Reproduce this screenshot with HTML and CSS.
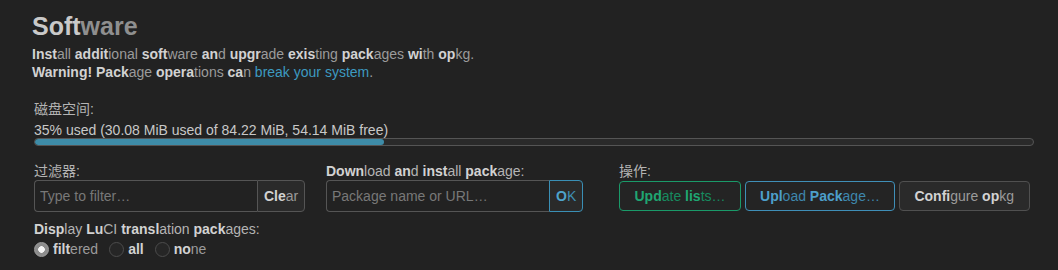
FILE: index.html
```html
<!DOCTYPE html>
<html lang="en">
<head>
<meta charset="utf-8">
<title>Software</title>
<link rel="stylesheet" href="styles.css">
</head>
<body>
<div class="page">
  <h2 class="title"><b>Soft</b><span>ware</span></h2>
  <p class="desc"><b>Inst</b>all <b>addit</b>ional <b>soft</b>ware <b>an</b>d <b>upgr</b>ade <b>exis</b>ting <b>pack</b>ages <b>wi</b>th <b>op</b>kg.</p>
  <p class="desc"><b>Warning! Pack</b>age <b>opera</b>tions <b>ca</b>n <a class="link" href="#">break your system</a>.</p>

  <div class="section">
    <div class="disk">
      <div class="lbl">磁盘空间:</div>
      <div class="used">35% used (30.08 MiB used of 84.22 MiB, 54.14 MiB free)</div>
      <div class="bar"><div class="fill" style="width:35%"></div></div>
    </div>

    <div class="controls">
      <div class="col">
        <div class="lbl">过滤器:</div>
        <div class="ctl">
          <input class="field" type="text" placeholder="Type to filter…">
          <button class="side"><b>Cle</b>ar</button>
        </div>
      </div>
      <div class="col">
        <div class="lbl"><b>Down</b>load <b>an</b>d <b>inst</b>all <b>pack</b>age:</div>
        <div class="ctl">
          <input class="field" type="text" placeholder="Package name or URL…">
          <button class="side ok"><b>O</b>K</button>
        </div>
      </div>
      <div class="col">
        <div class="lbl">操作:</div>
        <div class="actions">
          <button class="btn green"><b>Upd</b>ate <b>lis</b>ts…</button>
          <button class="btn blue"><b>Upl</b>oad <b>Pack</b>age…</button>
          <button class="btn plain"><b>Confi</b>gure <b>op</b>kg</button>
        </div>
      </div>
    </div>

    <div class="lang">
      <div class="lbl"><b>Disp</b>lay <b>Lu</b>CI <b>transl</b>ation <b>pack</b>ages:</div>
      <div class="radios">
        <label class="opt"><input class="rd" type="radio" name="lang" checked><span><b>filt</b>ered</span></label>
        <label class="opt"><input class="rd" type="radio" name="lang"><span><b>all</b></span></label>
        <label class="opt"><input class="rd" type="radio" name="lang"><span><b>no</b>ne</span></label>
      </div>
    </div>
  </div>
</div>
</body>
</html>
```
FILE: styles.css
```css
html, body {
  margin: 0;
  padding: 0;
  background: #222222;
}
body {
  font-family: "Liberation Sans", "Noto Sans CJK SC", sans-serif;
  font-size: 14px;
  color: #9b9b9b;
}
b {
  font-weight: bold;
  color: #d2d2d2;
}
.page {
  padding: 11px 24px 0 32px;
}
.title {
  margin: 0;
  font-size: 25px;
  line-height: 30px;
  font-weight: bold;
  color: #8f8f8f;
}
.title b {
  color: #c9c9c9;
}
.desc {
  margin: 0;
  line-height: 18px;
}
.title + .desc {
  margin-top: 4px;
}
.link {
  color: #3d9ac0;
  text-decoration: none;
}
.section {
  margin-left: 2px;
}
.disk {
  margin-top: 19px;
}
.lbl {
  line-height: 18px;
  color: #b4b4b4;
}
.lbl b {
  color: #d2d2d2;
}
.used {
  margin-top: 3px;
  line-height: 18px;
  color: #c8c8c8;
}
.bar {
  margin-top: -1px;
  height: 8px;
  box-sizing: border-box;
  border: 1px solid #555555;
  border-radius: 4px;
  background: #2a2a2a;
  overflow: hidden;
}
.fill {
  height: 100%;
  background: #3e8ca8;
  border-radius: 3px;
}
.controls {
  margin-top: 16px;
  display: grid;
  grid-template-columns: 292px 293px auto;
}
.ctl {
  display: flex;
  height: 32px;
}
.field {
  box-sizing: border-box;
  width: 223px;
  height: 32px;
  margin: 0;
  padding: 0 5px;
  border: 1px solid #555555;
  border-right: none;
  border-radius: 4px 0 0 4px;
  background: #222222;
  color: #cccccc;
  font-family: inherit;
  font-size: 14px;
  outline: none;
}
.field::placeholder {
  color: #787878;
}
.side {
  box-sizing: border-box;
  height: 32px;
  margin: 0;
  padding: 0 6px;
  border: 1px solid #555555;
  border-radius: 0 4px 4px 0;
  background: #2a2a2a;
  color: #9b9b9b;
  font-family: inherit;
  font-size: 14px;
}
.side.ok {
  border-color: #3a8fb5;
  color: #3f8fb3;
}
.side.ok b {
  color: #4ea3cc;
}
.actions {
  display: flex;
  align-items: center;
  height: 32px;
  gap: 3.5px;
}
.btn {
  box-sizing: border-box;
  height: 30px;
  margin: 0;
  padding: 0 14.5px;
  border: 1px solid #555555;
  border-radius: 4px;
  background: #242424;
  font-family: inherit;
  font-size: 14px;
  color: #9b9b9b;
}
.btn.green {
  border-color: #1a9a69;
  color: #178a5f;
}
.btn.green b {
  color: #1fa672;
}
.btn.blue {
  border-color: #3f8fb8;
  color: #3e87ad;
}
.btn.blue b {
  color: #4d9fca;
}
.btn.plain {
  background: #2a2a2a;
  border-color: #505050;
}
.lang {
  margin-top: 8px;
}
.radios {
  margin-top: 2px;
  line-height: 18px;
  display: flex;
  align-items: center;
}
.opt {
  display: inline-flex;
  align-items: center;
  margin-right: 11px;
  color: #9b9b9b;
}
.rd {
  appearance: none;
  -webkit-appearance: none;
  box-sizing: border-box;
  width: 15px;
  height: 15px;
  margin: 0 4px 0 0;
  border: 1px solid #4c4c4c;
  border-radius: 50%;
  background: #262626;
}
.rd:checked {
  border-color: #a0a0a0;
  background: radial-gradient(circle, #f4f4f4 0 3px, #8c8c8c 3.6px 100%);
}
```
